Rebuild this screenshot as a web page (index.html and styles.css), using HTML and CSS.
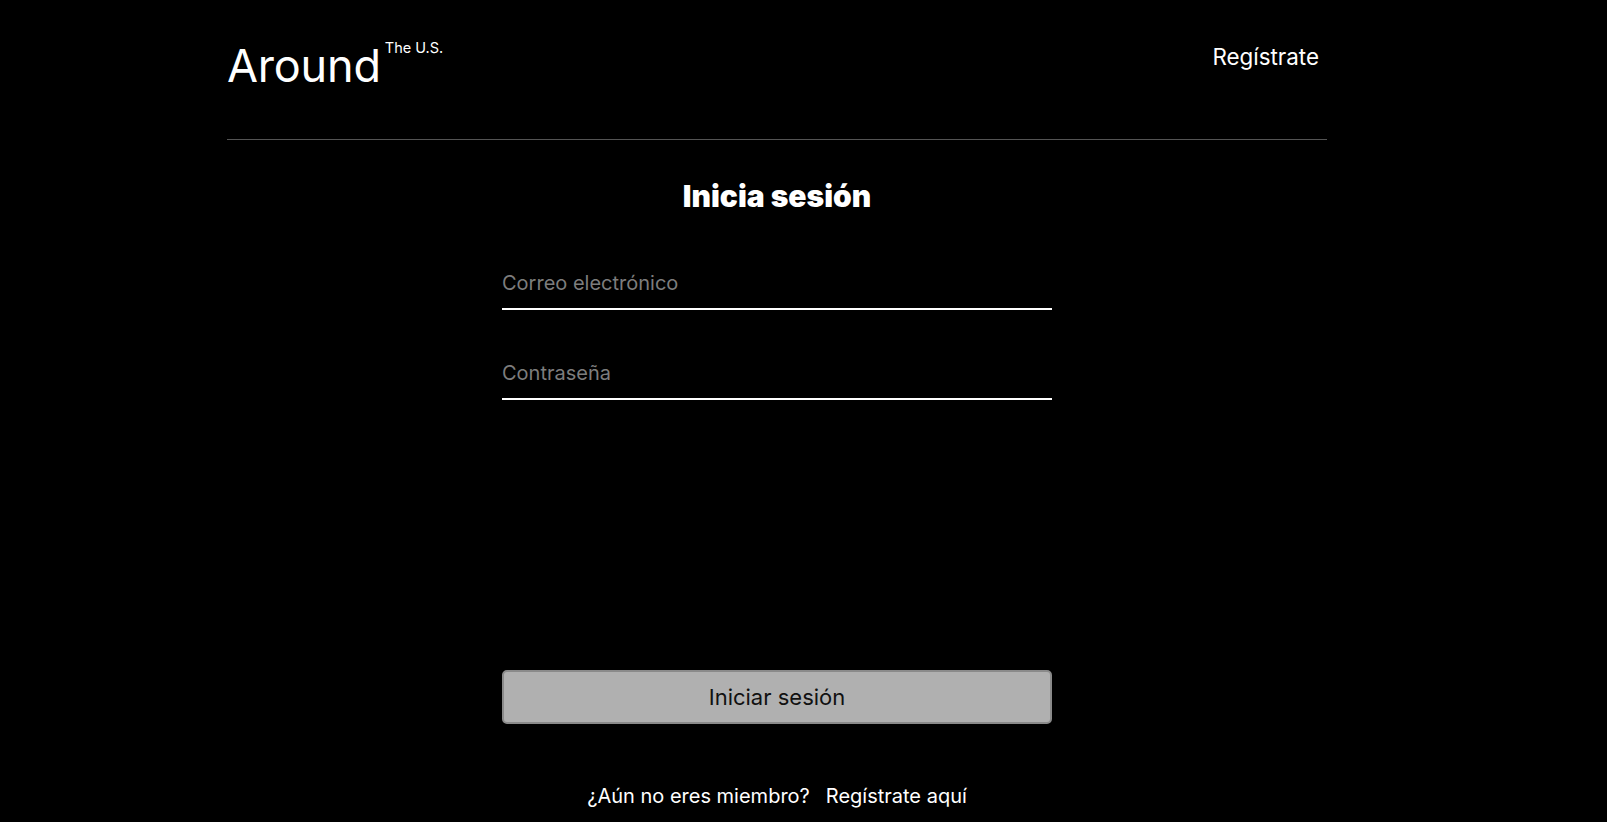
FILE: index.html
```html
<!DOCTYPE html>
<html lang="es">
<head>
<meta charset="utf-8">
<title>Around The U.S. — Inicia sesión</title>
<link rel="stylesheet" href="styles.css">
</head>
<body>
<div class="page">
  <header class="header">
    <div class="logo">
      <span class="logo__main">Around</span>
      <span class="logo__sup">The U.S.</span>
    </div>
    <a class="header__link" href="#">Regístrate</a>
  </header>
  <main class="auth">
    <h1 class="auth__title">Inicia sesión</h1>
    <form class="auth__form">
      <input class="auth__input auth__input_first" type="email" placeholder="Correo electrónico">
      <input class="auth__input auth__input_second" type="password" placeholder="Contraseña">
      <button class="auth__button" type="button">Iniciar sesión</button>
    </form>
    <p class="auth__footer"><span class="auth__question">¿Aún no eres miembro?</span><a class="auth__link" href="#">Regístrate aquí</a></p>
  </main>
</div>
</body>
</html>
```
FILE: styles.css
```css
html, body {
  margin: 0;
  padding: 0;
  background: #000;
}
body {
  font-family: Inter, "Noto Sans", sans-serif;
  color: #fff;
  height: 822px;
  overflow: hidden;
}
.page {
  width: 1554px;
}
.header {
  width: 1100px;
  margin: 0 auto;
  box-sizing: border-box;
  display: flex;
  justify-content: space-between;
  align-items: flex-start;
  padding: 39px 8px 46px 0;
  border-bottom: 1px solid #545454;
}
.logo {
  display: flex;
  align-items: flex-start;
}
.logo__main {
  font-size: 45px;
  line-height: 54px;
  font-weight: 400;
  letter-spacing: -0.2px;
}
.logo__sup {
  font-size: 14.5px;
  line-height: 17px;
  margin-left: 4px;
}
.header__link {
  color: #fff;
  text-decoration: none;
  font-size: 22.4px;
  line-height: 27px;
  margin-top: 4px;
}
.auth {
  display: flex;
  flex-direction: column;
  align-items: center;
}
.auth__title {
  margin: 38px 0 0;
  font-size: 30px;
  line-height: 36px;
  font-weight: 900;
}
.auth__form {
  width: 550px;
  display: flex;
  flex-direction: column;
  margin-top: 57px;
}
.auth__input {
  box-sizing: content-box;
  height: 24px;
  padding: 0 0 13px;
  margin: 0;
  border: none;
  border-bottom: 2px solid #fff;
  background: transparent;
  color: #fff;
  font-family: inherit;
  font-size: 20px;
  outline: none;
}
.auth__input::placeholder {
  color: #7d7d7d;
}
.auth__input_second {
  margin-top: 51px;
}
.auth__button {
  margin-top: 270px;
  height: 54px;
  box-sizing: border-box;
  border: 2px solid #8a8a8a;
  border-radius: 5px;
  background: #b0b0b0;
  color: #111;
  font-family: inherit;
  font-size: 22px;
  padding: 0;
  cursor: pointer;
}
.auth__footer {
  margin: 60px 0 0;
  font-size: 20px;
  line-height: 24px;
}
.auth__question {
  margin-right: 16px;
}
.auth__link {
  color: #fff;
  text-decoration: none;
}
```
